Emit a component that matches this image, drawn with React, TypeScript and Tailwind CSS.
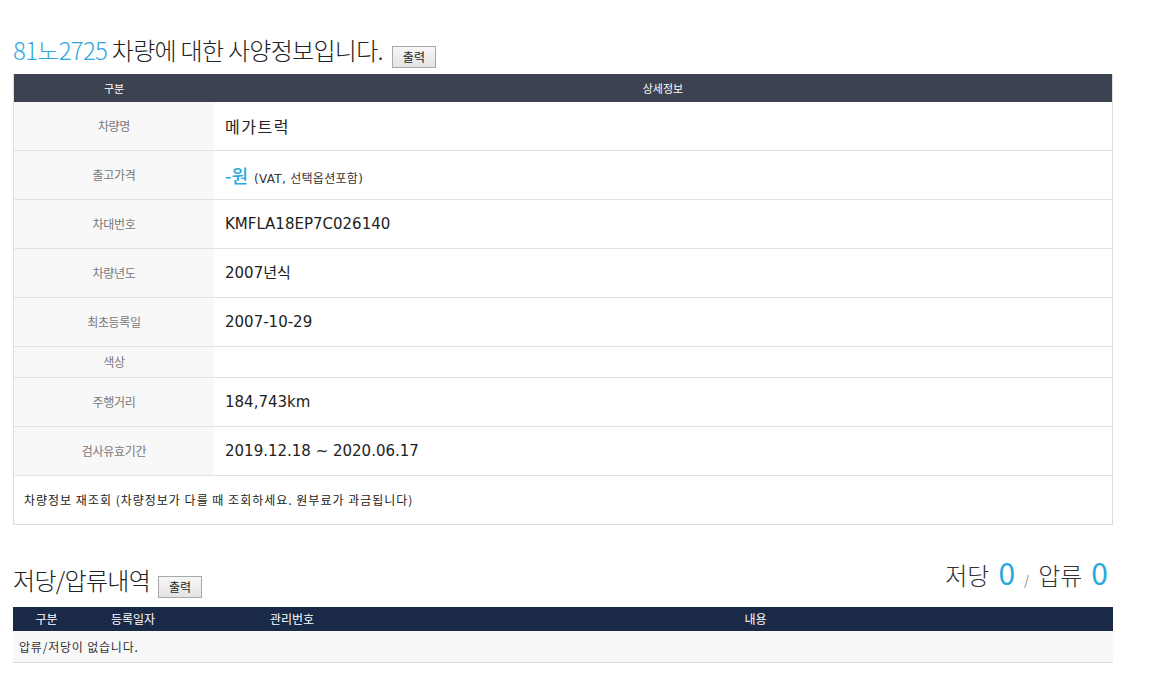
const KR = "font-['Noto_Sans_CJK_KR','Noto_Sans',sans-serif]";
const VAL = "font-['DejaVu_Sans','Noto_Sans_CJK_KR',sans-serif]";

type Row = { label: string; value?: React.ReactNode; short?: boolean };

const rows: Row[] = [
  { label: "차량명", value: <span className={`${KR} text-[16px] tracking-[1.5px]`}>메가트럭</span> },
  {
    label: "출고가격",
    value: (
      <span className="flex items-baseline gap-[6px]">
        <span className={`${KR} text-[18px] font-medium text-[#29a8e0]`}>-원</span>
        <span className="text-[12px] tracking-[0.3px] text-[#333]">(VAT, 선택옵션포함)</span>
      </span>
    ),
  },
  { label: "차대번호", value: "KMFLA18EP7C026140" },
  { label: "차량년도", value: "2007년식" },
  { label: "최초등록일", value: "2007-10-29" },
  { label: "색상", short: true },
  { label: "주행거리", value: "184,743km" },
  { label: "검사유효기간", value: "2019.12.18 ~ 2020.06.17" },
];

function PrintButton() {
  return (
    <button className="h-[22px] w-[44px] border border-[#a9a9a9] bg-gradient-to-b from-[#f7f7f7] to-[#e3e3e3] text-[12px] leading-none text-[#222]">
      출력
    </button>
  );
}

export default function App() {
  return (
    <div className={`${KR} min-h-[693px] bg-white pl-[13px] pt-[32px] text-[#333]`}>
      <div className="w-[1100px]">
        <div className="mb-[6px] flex items-end gap-[9px]">
          <h1 className="text-[24px] font-light leading-[36px] tracking-[-0.7px] text-[#222]">
            <span className="text-[#2fa8e0]">81노2725</span> 차량에 대한 사양정보입니다.
          </h1>
          <PrintButton />
        </div>

        <div className="border-x border-b border-[#dcdcdc]">
          <div className="flex h-[28px] items-center bg-[#3c4250] text-[11px] text-white">
            <div className="w-[200px] text-center">구분</div>
            <div className="flex-1 text-center">상세정보</div>
          </div>
          {rows.map((r) => (
            <div
              key={r.label}
              className={`flex border-b border-[#e2e2e2] ${r.short ? "h-[31px]" : "h-[49px]"}`}
            >
              <div className="flex w-[200px] items-center justify-center bg-[#f8f8f8] text-[12px] tracking-[-0.3px] text-[#777]">
                {r.label}
              </div>
              <div className={`${VAL} flex flex-1 items-center pl-[11px] text-[15px] text-[#222]`}>
                {r.value}
              </div>
            </div>
          ))}
          <div className="flex h-[48px] items-center pl-[10px] text-[12px] tracking-[1px] text-[#222]">
            차량정보 재조회 (차량정보가 다를 때 조회하세요. 원부료가 과금됩니다)
          </div>
        </div>

        <div className="mt-[29px] mb-[9px] flex items-end justify-between">
          <div className="flex items-end gap-[8px]">
            <h2 className="text-[24px] font-light leading-[36px] tracking-[-0.7px] text-[#222]">저당/압류내역</h2>
            <PrintButton />
          </div>
          <div className="mr-[5px] flex items-baseline gap-[9px] leading-[36px] text-[#333]">
            <span className="text-[24px] font-light">저당</span>
            <span className="text-[30px] text-[#29a8e0]">0</span>
            <span className="text-[13px] text-[#888]">/</span>
            <span className="text-[24px] font-light">압류</span>
            <span className="text-[30px] text-[#29a8e0]">0</span>
          </div>
        </div>

        <div className="border-b border-[#dcdcdc]">
          <div className="grid h-[24px] grid-cols-[67px_106px_212px_1fr] items-center bg-[#1b2948] text-[12px] text-white">
            <div className="text-center">구분</div>
            <div className="text-center">등록일자</div>
            <div className="text-center">관리번호</div>
            <div className="text-center">내용</div>
          </div>
          <div className="flex h-[31px] items-center bg-[#f8f8f8] pl-[6px] text-[12px] tracking-[0.8px] text-[#333]">
            압류/저당이 없습니다.
          </div>
        </div>
      </div>
    </div>
  );
}
